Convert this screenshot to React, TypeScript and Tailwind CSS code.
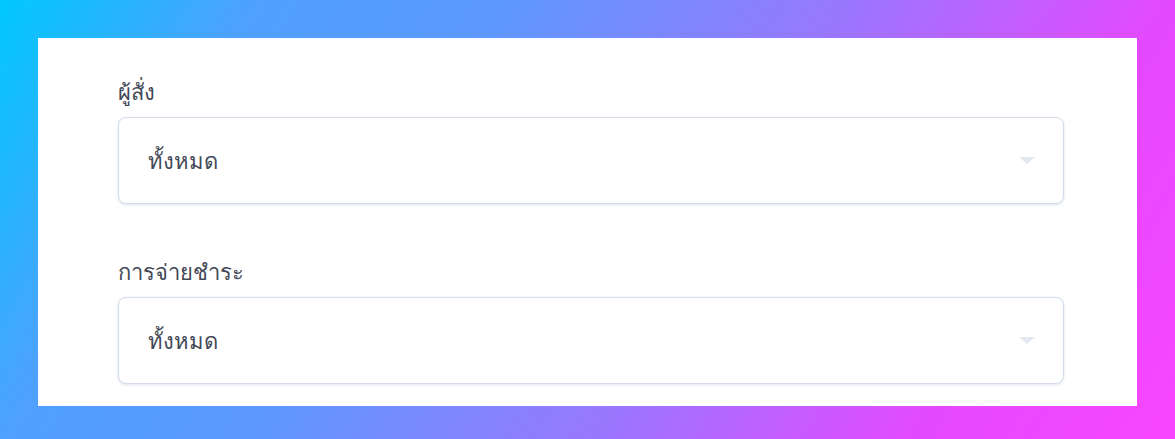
import React from "react";

function Caret() {
  return (
    <svg width="16" height="8" viewBox="0 0 16 8" className="shrink-0">
      <path d="M0 0 L16 0 L8 7 Z" fill="#e3e8ef" />
    </svg>
  );
}

function Field({ label }: { label: string }) {
  return (
    <div className="flex flex-col">
      <div className="h-[38px] text-[22px] leading-[32px] text-[#434956]">{label}</div>
      <div className="mt-[4px] flex h-[87px] items-center justify-between rounded-[8px] border-[1.5px] border-[#d3dce8] bg-white pl-[29px] pr-[28px] shadow-[0_1px_3px_rgba(170,185,210,0.4)]">
        <span className="text-[22px] text-[#434956]">ทั้งหมด</span>
        <Caret />
      </div>
    </div>
  );
}

export default function App() {
  return (
    <div
      className="h-[439px] w-[1175px] p-[38px] bg-[linear-gradient(120deg,#00c8ff_0%,#4fa0ff_18%,#5c98ff_35%,#9878ff_59%,#e449ff_82%,#f846ff_100%)]"
      style={{ fontFamily: '"Noto Sans", "DejaVu Sans", sans-serif' }}
    >
      <div className="flex h-[368px] flex-col gap-[51px] bg-white pl-[80px] pr-[73px] pt-[37px]">
        <Field label="ผู้สั่ง" />
        <Field label="การจ่ายชำระ" />
      </div>
    </div>
  );
}
